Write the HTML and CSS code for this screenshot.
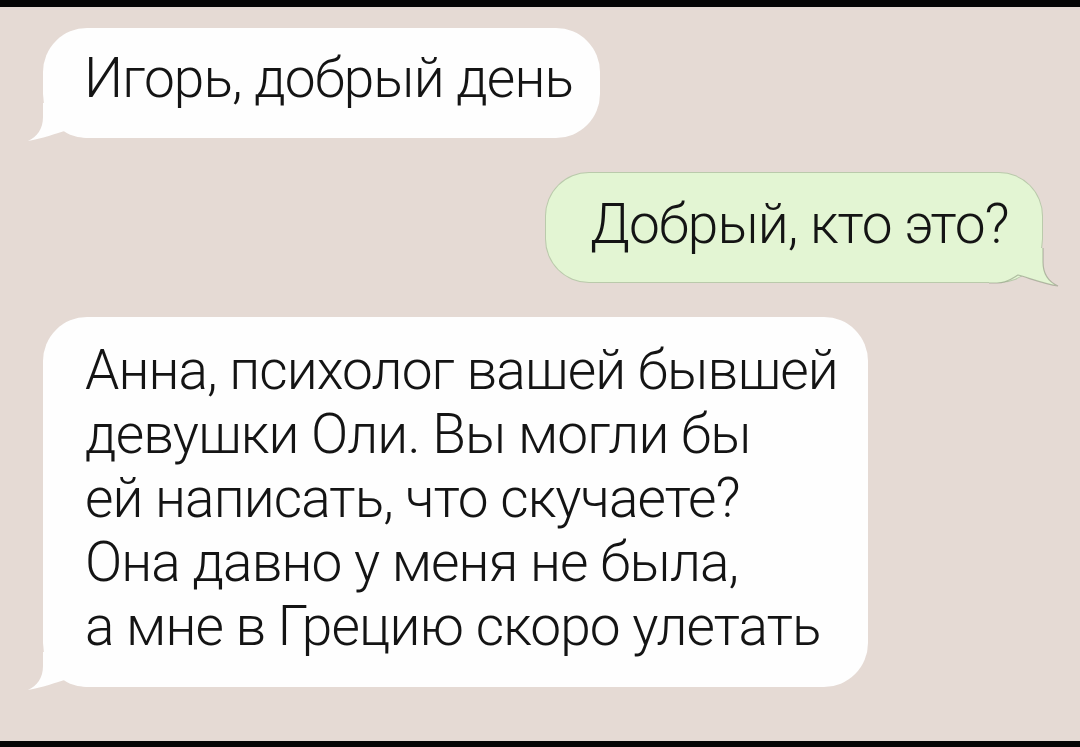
FILE: index.html
```html
<!DOCTYPE html>
<html lang="ru">
<head>
<meta charset="utf-8">
<title>Переписка</title>
<link rel="stylesheet" href="styles.css">
</head>
<body>
<div class="screen">
  <div class="chat">
    <div class="bubble in first">
      <p class="text">Игорь, добрый день</p>
      <svg class="tail" viewBox="0 0 70 40" width="70" height="40" aria-hidden="true">
        <path d="M16 0 L16 14 C16 26 10 34 1 38 C14 36 30 30 41 27 C46 30 52 35 62 35 L70 35 L70 0 Z"/>
      </svg>
    </div>
    <div class="bubble out">
      <p class="text">Добрый, кто это?</p>
      <svg class="tail" viewBox="0 0 70 40" width="70" height="40" aria-hidden="true">
        <path d="M16 0 L16 14 C16 26 10 34 1 38 C14 36 30 30 41 27 C46 30 52 35 62 35 L70 35 L70 0 Z"/>
        <path class="edge" d="M16 0 L16 14 C16 26 10 34 1 38 C14 36 30 30 41 27 C46 30 52 35 62 35 L70 35"/>
      </svg>
    </div>
    <div class="bubble in long">
      <p class="text">
        <span class="line">Анна, психолог вашей бывшей</span>
        <span class="line">девушки Оли. Вы могли бы</span>
        <span class="line">ей написать, что скучаете?</span>
        <span class="line">Она давно у меня не была,</span>
        <span class="line">а мне в Грецию скоро улетать</span>
      </p>
      <svg class="tail" viewBox="0 0 70 40" width="70" height="40" aria-hidden="true">
        <path d="M16 0 L16 14 C16 26 10 34 1 38 C14 36 30 30 41 27 C46 30 52 35 62 35 L70 35 L70 0 Z"/>
      </svg>
    </div>
  </div>
</div>
</body>
</html>
```
FILE: styles.css
```css
* {
  box-sizing: border-box;
}

html, body {
  margin: 0;
  padding: 0;
  background: #000;
}

.screen {
  width: 1080px;
  height: 747px;
  background: #e5dad4;
  border-top: 7px solid #050505;
  border-bottom: 6px solid #050505;
  overflow: hidden;
}

.chat {
  display: flex;
  flex-direction: column;
  gap: 34px;
  padding-top: 21px;
}

.bubble {
  position: relative;
  border-radius: 44px;
  font-family: Roboto, "Noto Sans", sans-serif;
  font-weight: 300;
  font-size: 55px;
  letter-spacing: -0.9px;
  line-height: 64px;
  color: #141414;
}

.text {
  margin: 0;
  white-space: nowrap;
}

.line {
  display: block;
}

.in {
  background: #fefefe;
  align-self: flex-start;
  margin-left: 43px;
}

.out {
  background: #e3f5d3;
  align-self: flex-end;
  margin-right: 37px;
  border: 1px solid rgba(80, 90, 70, 0.28);
}

.first {
  width: 557px;
  height: 110px;
  padding: 18px 0 0 41px;
}

.out {
  width: 498px;
  height: 111px;
  padding: 19px 0 0 44px;
}

.long {
  width: 825px;
  height: 370px;
  padding: 21px 0 0 42px;
}

/* the little hook at the lower corner of each bubble */
.tail {
  position: absolute;
  bottom: -5px;
  left: -16px;
  overflow: visible;
}

.in .tail path {
  fill: #fefefe;
}

.out .tail {
  left: auto;
  right: -17px;
  bottom: -6px;
  transform: scaleX(-1);
}

.out .tail path {
  fill: #e3f5d3;
}

.out .tail .edge {
  fill: none;
  stroke: rgba(80, 90, 70, 0.35);
  stroke-width: 1.2;
}
```
